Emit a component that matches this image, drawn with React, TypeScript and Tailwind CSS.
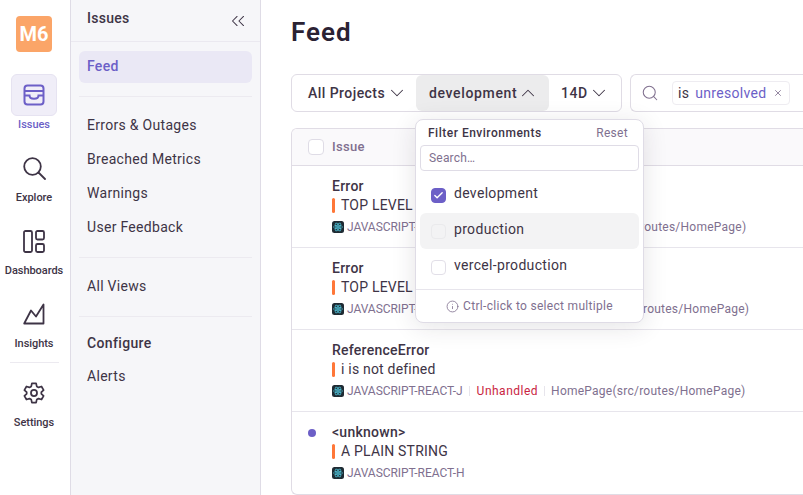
import React from "react";
import { ChevronDown, ChevronUp, ChevronsLeft, Search, X, Check, Info } from "lucide-react";

const font = { fontFamily: "Roboto, sans-serif" };

function IssuesIcon() {
  return (
    <svg width="22" height="22" viewBox="0 0 22 22" fill="none" stroke="#6c5fc7" strokeWidth="2">
      <rect x="1.500" y="1.500" width="19" height="19" rx="3" />
      <path d="M1.500 7h19" />
      <path d="M1.500 11.500h5c0 2.300 1.500 3.200 4.500 3.200s4.500-.9 4.500-3.200h5" />
    </svg>
  );
}
function ExploreIcon() {
  return (
    <svg width="23" height="23" viewBox="0 0 23 23" fill="none" stroke="#3e3446" strokeWidth="1.800" strokeLinecap="round">
      <circle cx="9.500" cy="9.500" r="8.300" />
      <path d="M15.500 15.500l6.500 6.500" />
    </svg>
  );
}
function DashIcon() {
  return (
    <svg width="22" height="23" viewBox="0 0 22 23" fill="none" stroke="#3e3446" strokeWidth="1.800">
      <rect x="1" y="1" width="8" height="21" rx="1.500" />
      <rect x="13" y="1" width="8" height="8.500" rx="1.500" />
      <rect x="13" y="14" width="8" height="8" rx="1.500" />
    </svg>
  );
}
function InsightsIcon() {
  return (
    <svg width="22" height="22" viewBox="0 0 22 22" fill="none" stroke="#3e3446" strokeWidth="1.800" strokeLinejoin="round">
      <path d="M1.200 20.500L8 7.500l5 6L20.500 1.500v19z" />
    </svg>
  );
}
function GearIcon() {
  return (
    <svg width="22" height="22" viewBox="0 0 24 24" fill="none" stroke="#3e3446" strokeWidth="1.900" strokeLinejoin="round">
      <path d="M9.700 1.500h4.600l.7 3.300 2 1.100 3.200-1 2.300 4-2.500 2.200v1.800l2.500 2.200-2.300 4-3.200-1-2 1.100-.7 3.300H9.700l-.7-3.300-2-1.100-3.200 1-2.300-4L4 12.900v-1.800L1.500 8.900l2.300-4 3.200 1 2-1.100z" />
      <circle cx="12" cy="12" r="3.300" />
    </svg>
  );
}
function ReactBadge() {
  return (
    <svg width="12" height="12" viewBox="0 0 12 12" className="shrink-0">
      <rect width="12" height="12" rx="2.500" fill="#1f2b33" />
      <g fill="none" stroke="#4fc3d9" strokeWidth="0.700">
        <ellipse cx="6" cy="6" rx="4.500" ry="1.800" />
        <ellipse cx="6" cy="6" rx="4.500" ry="1.800" transform="rotate(60 6 6)" />
        <ellipse cx="6" cy="6" rx="4.500" ry="1.800" transform="rotate(120 6 6)" />
      </g>
      <circle cx="6" cy="6" r="1" fill="#4fc3d9" />
    </svg>
  );
}

function RailItem({ icon, label, active }: { icon: React.ReactNode; label: string; active?: boolean }) {
  return (
    <div className="flex flex-col items-center">
      <div className={`w-[46px] h-[42px] rounded-md flex items-center justify-center ${active ? "bg-[#f0eef8] border border-[#e6e3f1]" : ""}`}>
        {icon}
      </div>
      <span className={`text-[11px] leading-[14px] mt-[2px] tracking-[-0.05px] ${active ? "text-[#6c5fc7]" : "text-[#3e3446]"}`} style={{ fontWeight: 500 }}>
        {label}
      </span>
    </div>
  );
}

function Divider({ className }: { className: string }) {
  return <div className={`h-px bg-[#eceaf0] mx-[8px] ${className}`} />;
}

function NavLink({ children, className = "" }: { children: React.ReactNode; className?: string }) {
  return <div className={`h-[34px] flex items-center pl-[16px] text-[14px] text-[#3e3446] tracking-[0.3px] ${className}`}>{children}</div>;
}

function Row({ title, msg, id, dot, tail, height }: { title: string; msg: string; id: string; dot?: boolean; tail?: boolean; height: string }) {
  return (
    <div className={`relative border-b border-[#e7e5ec] pl-[40px] pt-[12px] ${height}`}>
      {dot && <span className="absolute left-[16px] top-[17px] w-2 h-2 rounded-full bg-[#6c5fc7]" />}
      <div className="text-[14px] leading-[17px] font-medium text-[#3e3446] tracking-[0.25px]">{title}</div>
      <div className="flex items-center h-[19px] mt-[1px]">
        <span className="w-[3px] h-[15px] rounded-sm bg-[#ff7738] mr-[6px]" />
        <span className="text-[14px] text-[#3e3446] tracking-[0.2px]">{msg}</span>
      </div>
      <div className="flex items-center h-[18px] mt-[3px] text-[12px] text-[#80708f] whitespace-nowrap">
        <ReactBadge />
        <span className="ml-[3px] tracking-[-0.05px]">{id}</span>
        {tail && (
          <>
            <span className="w-px h-[10px] bg-[#e7e5ec] ml-[6px] mr-[7px]" />
            <span className="text-[#c9243f] tracking-[0.5px]">Unhandled</span>
            <span className="w-px h-[10px] bg-[#e7e5ec] mx-[6px]" />
            <span className="tracking-[0.24px]">HomePage(src/routes/HomePage)</span>
          </>
        )}
      </div>
    </div>
  );
}

function EnvOption({ label, checked, hover }: { label: string; checked?: boolean; hover?: boolean }) {
  return (
    <div className={`h-[36px] mx-[4px] rounded-md flex items-center pl-[11px] ${hover ? "bg-[#f3f3f4]" : ""}`}>
      <span className={`w-[15px] h-[15px] rounded-[4px] flex items-center justify-center border ${checked ? "bg-[#6c5fc7] border-[#6c5fc7]" : hover ? "border-[#eaeaec]" : "border-[#e2dfe8] bg-white"}`}>
        {checked && <Check size={11} color="white" strokeWidth={3} />}
      </span>
      <span className="ml-[8px] text-[14px] text-[#3e3446] tracking-[0.32px] mb-[3px]">{label}</span>
    </div>
  );
}

export default function App() {
  return (
    <div className="w-[803px] h-[495px] overflow-hidden flex bg-white" style={font}>
      {/* Rail */}
      <aside className="w-[71px] shrink-0 border-r border-[#dfdce6] flex flex-col items-center pt-[16px] pr-[2px]">
        <div className="w-9 h-9 rounded-[4px] bg-[#fba568] flex items-center justify-center text-white font-bold text-[20px]">M6</div>
        <div className="mt-[22px] flex flex-col items-center">
          <RailItem active icon={<IssuesIcon />} label="Issues" />
        </div>
        <div className="mt-[15px]"><RailItem icon={<ExploreIcon />} label="Explore" /></div>
        <div className="mt-[15px]"><RailItem icon={<DashIcon />} label="Dashboards" /></div>
        <div className="mt-[15px]"><RailItem icon={<InsightsIcon />} label="Insights" /></div>
        <div className="w-[49px] h-px bg-[#eceaf0] mt-[11px]" />
        <div className="mt-[9px]"><RailItem icon={<GearIcon />} label="Settings" /></div>
      </aside>

      {/* Secondary nav */}
      <nav className="w-[190px] shrink-0 bg-[#f6f6f9] border-r border-[#dfdce6]">
        <div className="h-[42px] border-b border-[#ebe9f0] flex items-center justify-between pl-[16px] pr-[14px]">
          <span className="text-[14px] font-medium text-[#3e3446] tracking-[0.25px] mb-[5px]">Issues</span>
          <ChevronsLeft size={22} color="#3e3446" strokeWidth={1.100} className="mr-[-3px]" />
        </div>
        <div className="mx-[8px] mt-[9px] h-[32px] rounded-md bg-[#eae8f5] flex items-center pl-[8px] pb-[1px] text-[14px] font-medium text-[#6c5fc7] tracking-[0.3px]">Feed</div>
        <Divider className="mt-[13px] mb-[11px]" />
        <NavLink>Errors &amp; Outages</NavLink>
        <NavLink>Breached Metrics</NavLink>
        <NavLink>Warnings</NavLink>
        <NavLink>User Feedback</NavLink>
        <Divider className="mt-[13px] mb-[11px]" />
        <NavLink>All Views</NavLink>
        <Divider className="mt-[13px] mb-[9px]" />
        <div className="h-[34px] flex items-center pl-[16px] text-[14px] font-medium text-[#3e3446] tracking-[0.35px]">Configure</div>
        <NavLink className="-mt-[1px]">Alerts</NavLink>
      </nav>

      {/* Main */}
      <main className="relative flex-1 min-w-0 pl-[30px]">
        <h1 className="h-[74px] pt-[15px] text-[26px] leading-[34px] font-semibold text-[#2b2233] tracking-[1px]">Feed</h1>

        <div className="flex gap-[8px] w-[560px]">
          <div className="w-[331px] h-[38px] shrink-0 rounded-md border border-[#e0dce5] flex items-center text-[14px] font-medium text-[#3e3446]">
            <div className="w-[124px] h-full flex items-center pl-[16px] tracking-[0.45px]">
              All Projects <ChevronDown size={22} strokeWidth={1.100} className="ml-[1px] -mr-[6px]" />
            </div>
            <div className="w-[133px] h-full -my-px flex items-center pl-[13px] bg-[#ececed] rounded-md tracking-[0.65px]">
              development <ChevronUp size={22} strokeWidth={1.100} />
            </div>
            <div className="h-full flex items-center pl-[12px] tracking-[0.5px]">
              14D <ChevronDown size={22} strokeWidth={1.100} />
            </div>
          </div>
          <div className="flex-1 h-[38px] rounded-l-md border border-r-0 border-[#e0dce5] flex items-center pl-[10px]">
            <Search size={18} color="#80708f" strokeWidth={1.400} />
            <div className="ml-[13px] h-[24px] w-[118px] rounded border border-[#eeecf1] flex items-center pl-[5px] text-[14px] text-[#3e3446] tracking-[0.3px]">
              is <span className="ml-[6px] text-[#6c5fc7]">unresolved</span>
              <X size={10} color="#80708f" className="ml-[7px]" />
            </div>
          </div>
        </div>

        <section className="mt-[16px] w-[530px] h-[367px] rounded-l-md border border-r-0 border-[#e0dce5] overflow-hidden">
          <header className="h-[37px] bg-[#faf9fb] border-b border-[#e0dce5] flex items-center pl-[16px]">
            <span className="w-[16px] h-[16px] rounded-[4px] border border-[#dfdce6] bg-white" />
            <span className="ml-[8px] text-[13px] font-medium text-[#80708f] tracking-[0.3px]">Issue</span>
          </header>
          <Row height="h-[82px]" title="Error" msg="TOP LEVEL" id="JAVASCRIPT-REACT-K" tail />
          <Row height="h-[82px]" title="Error" msg="TOP LEVEL" id="JAVASCRIPT-REACT-M" tail />
          <Row height="h-[82px]" title="ReferenceError" msg="i is not defined" id="JAVASCRIPT-REACT-J" tail />
          <Row height="h-[82px] border-b-0" dot title="<unknown>" msg="A PLAIN STRING" id="JAVASCRIPT-REACT-H" />
        </section>

        {/* Dropdown */}
        <div className="absolute left-[154px] top-[119px] w-[229px] h-[204px] bg-white rounded-lg border border-[#dfdce6] shadow-[0_4px_24px_rgba(43,34,51,0.12)]">
          <div className="h-[25px] flex items-center justify-between pl-[12px] pr-[15px]">
            <span className="text-[12px] font-medium text-[#3e3446] tracking-[0.5px]">Filter Environments</span>
            <span className="text-[12px] text-[#80708f] tracking-[0.3px]">Reset</span>
          </div>
          <div className="mx-[4px] h-[26px] rounded-[4px] border border-[#dfdce6] flex items-center pl-[8px] text-[12px] text-[#80708f] tracking-[0.2px]">Search…</div>
          <div className="mt-[6px]">
            <EnvOption checked label="development" />
            <EnvOption hover label="production" />
            <EnvOption label="vercel-production" />
          </div>
          <div className="mt-[4px] h-[33px] border-t border-[#e7e5ec] flex items-center justify-center gap-[4px] text-[12px] text-[#80708f] tracking-[0.3px]">
            <Info size={13} strokeWidth={1.500} /> Ctrl-click to select multiple
          </div>
        </div>
      </main>
    </div>
  );
}
